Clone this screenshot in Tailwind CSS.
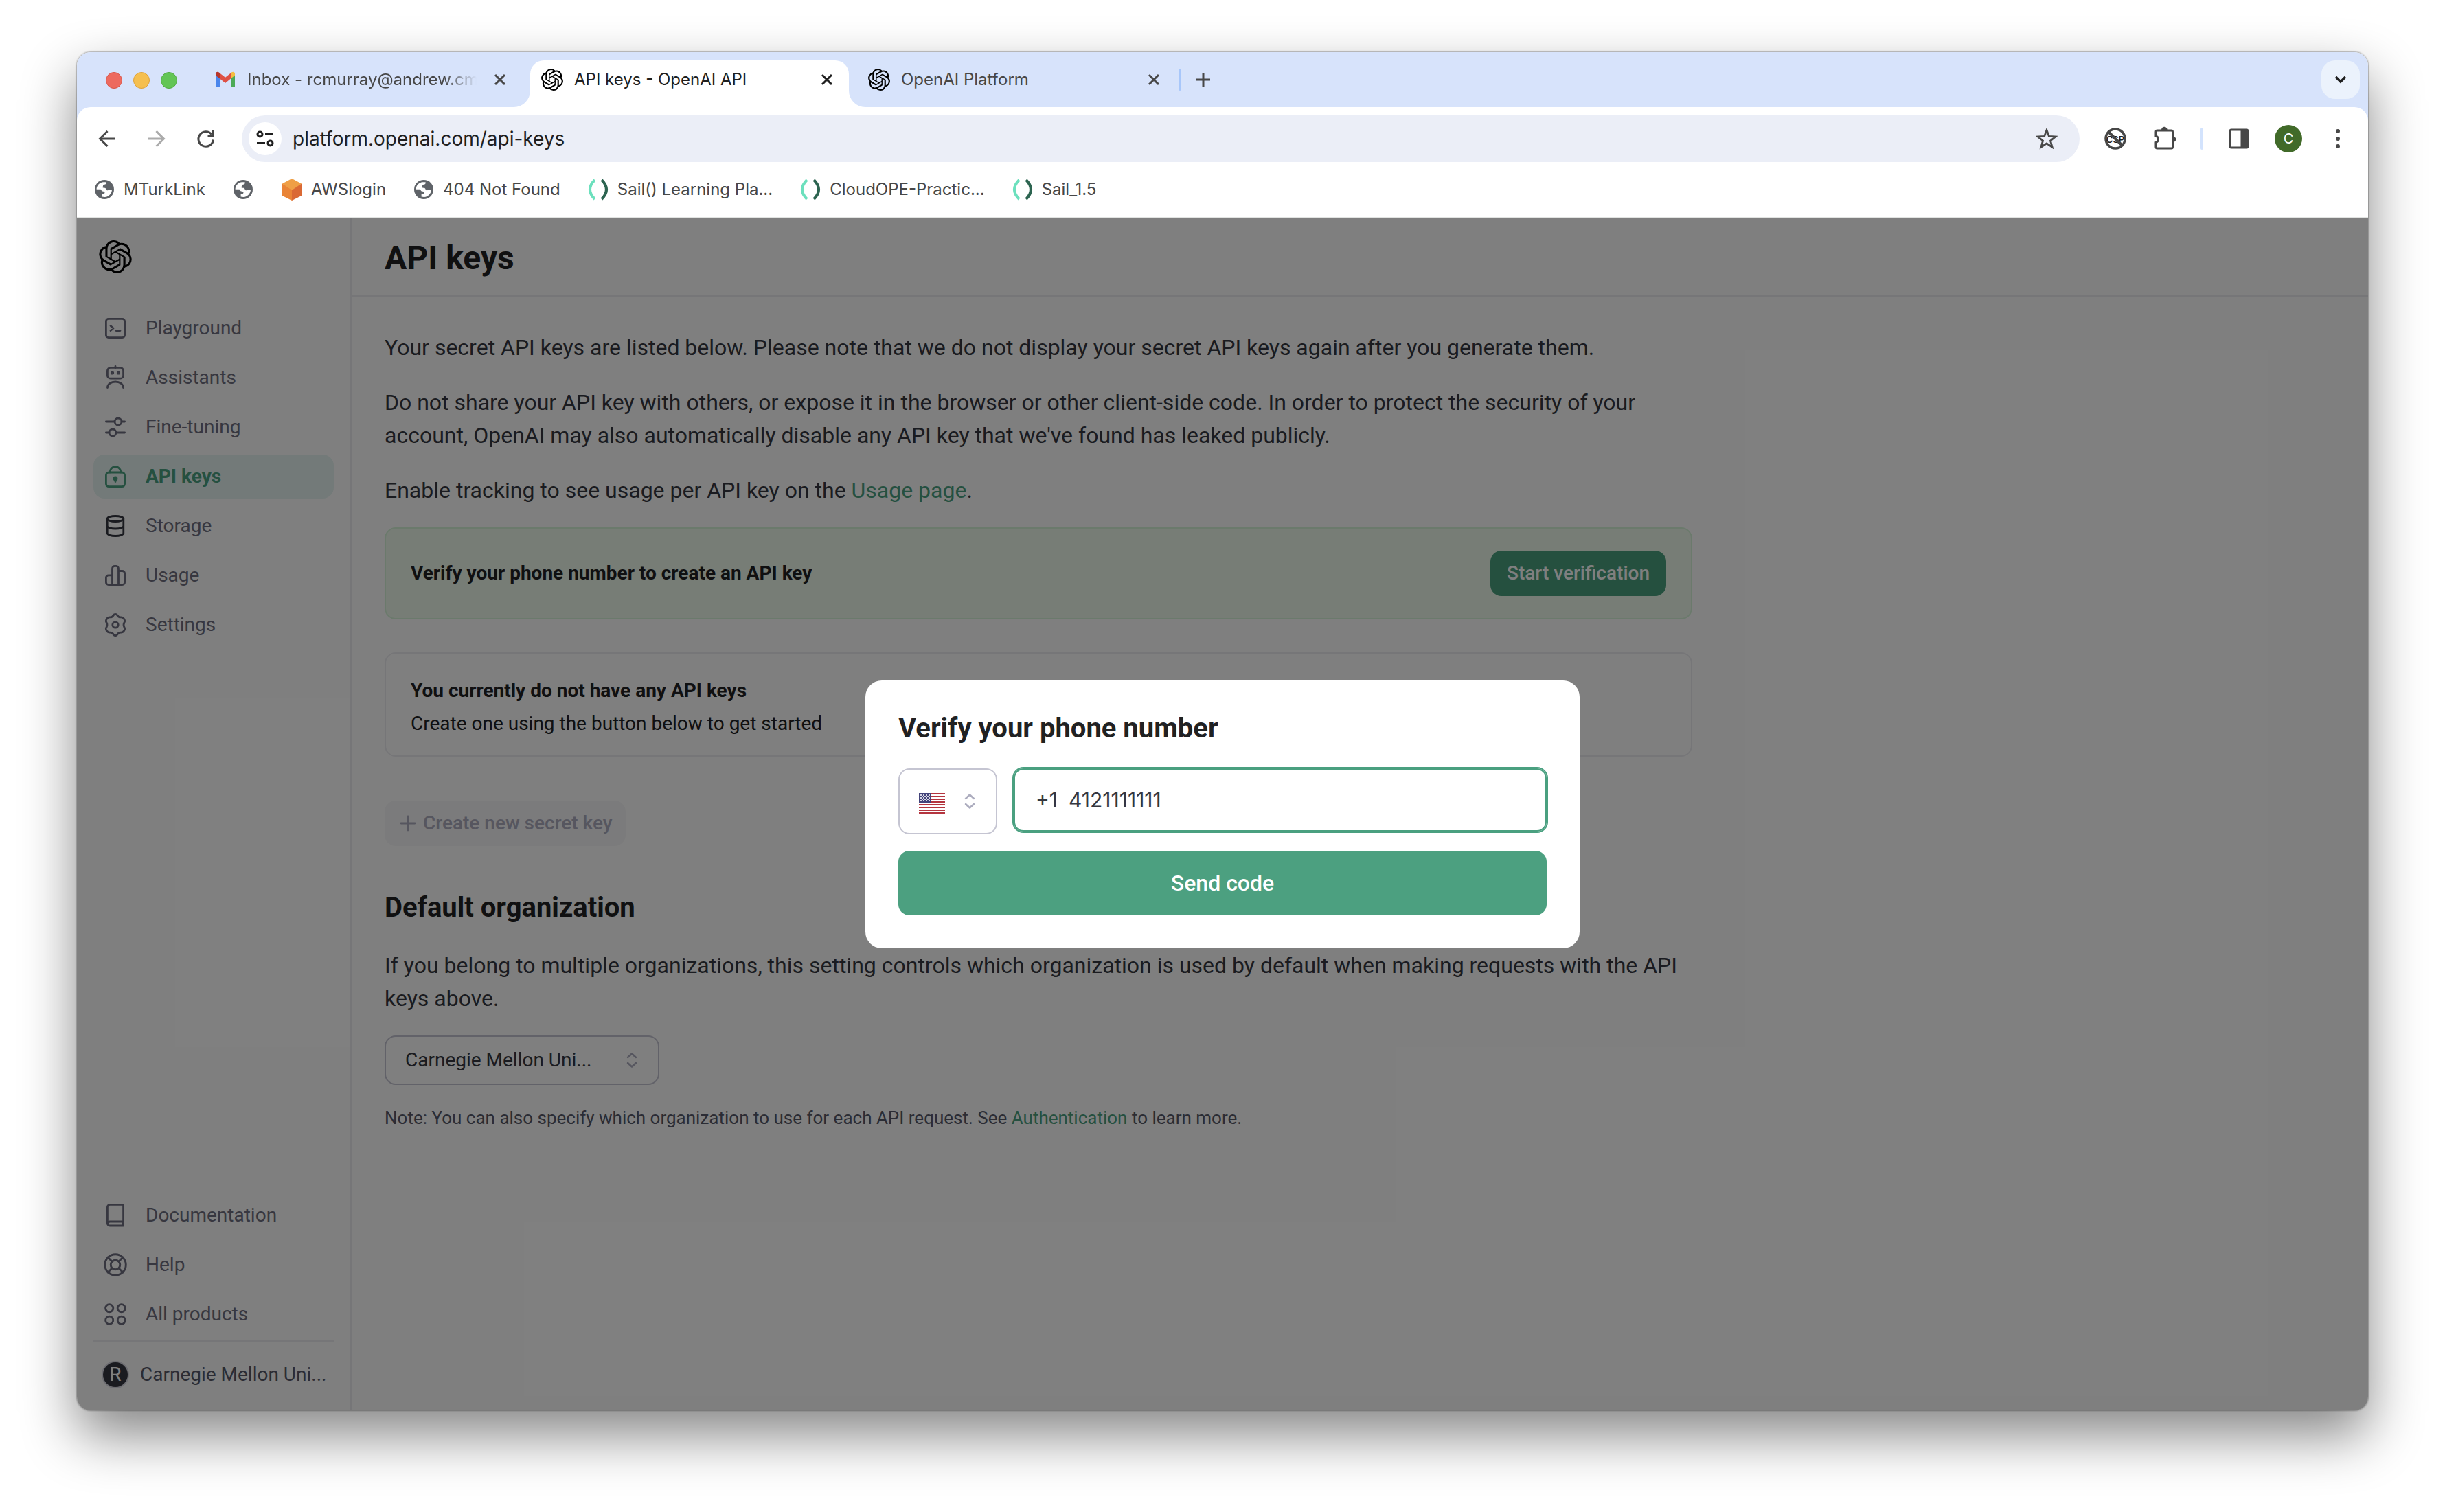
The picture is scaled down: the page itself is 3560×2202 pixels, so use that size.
<!DOCTYPE html>
<html lang="en">
<head>
<meta charset="utf-8">
<meta name="viewport" content="width=device-width, initial-scale=1">
<title>API keys - OpenAI API</title>
<script src="https://cdn.jsdelivr.net/npm/@tailwindcss/browser@4"></script>
</head>
<body class="flex min-h-screen bg-white px-28 pt-[76px] pb-[148px]">

<!-- Shared symbols -->
<svg class="hidden" aria-hidden="true">
  <symbol id="openai" viewBox="0 0 24 24"><path d="M22.2819 9.8211a5.9847 5.9847 0 0 0-.5157-4.9108 6.0462 6.0462 0 0 0-6.5098-2.9A6.0651 6.0651 0 0 0 4.9807 4.1818a5.9847 5.9847 0 0 0-3.9977 2.9 6.0462 6.0462 0 0 0 .7427 7.0966 5.98 5.98 0 0 0 .511 4.9107 6.051 6.051 0 0 0 6.5146 2.9001A5.9847 5.9847 0 0 0 13.2599 24a6.0557 6.0557 0 0 0 5.7718-4.2058 5.9894 5.9894 0 0 0 3.9977-2.9001 6.0557 6.0557 0 0 0-.7475-7.0729zm-9.022 12.6081a4.4755 4.4755 0 0 1-2.8764-1.0408l.1419-.0804 4.7783-2.7582a.7948.7948 0 0 0 .3927-.6813v-6.7369l2.02 1.1686a.071.071 0 0 1 .038.052v5.5826a4.504 4.504 0 0 1-4.4945 4.4944zm-9.6607-4.1254a4.4708 4.4708 0 0 1-.5346-3.0137l.142.0852 4.783 2.7582a.7712.7712 0 0 0 .7806 0l5.8428-3.3685v2.3324a.0804.0804 0 0 1-.0332.0615L9.74 19.9502a4.4992 4.4992 0 0 1-6.1408-1.6464zM2.3408 7.8956a4.485 4.485 0 0 1 2.3655-1.9728V11.6a.7664.7664 0 0 0 .3879.6765l5.8144 3.3543-2.0201 1.1685a.0757.0757 0 0 1-.071 0l-4.8303-2.7865A4.504 4.504 0 0 1 2.3408 7.872zm16.5963 3.8558L13.1038 8.364 15.1192 7.2a.0757.0757 0 0 1 .071 0l4.8303 2.7913a4.4944 4.4944 0 0 1-.6765 8.1042v-5.6772a.79.79 0 0 0-.407-.667zm2.0107-3.0231l-.142-.0852-4.7735-2.7818a.7759.7759 0 0 0-.7854 0L9.409 9.2297V6.8974a.0662.0662 0 0 1 .0284-.0615l4.8303-2.7866a4.4992 4.4992 0 0 1 6.6802 4.66zM8.3065 12.863l-2.02-1.1638a.0804.0804 0 0 1-.038-.0567V6.0742a4.4992 4.4992 0 0 1 7.3757-3.4537l-.142.0805L8.704 5.459a.7948.7948 0 0 0-.3927.6813zm1.0976-2.3654l2.602-1.4998 2.6069 1.4998v2.9994l-2.5974 1.4997-2.6067-1.4997Z"/></symbol>
  <symbol id="close" viewBox="0 0 20 20"><path d="M3 3l14 14M17 3L3 17" fill="none" stroke="currentColor" stroke-width="3"/></symbol>
  <symbol id="globe" viewBox="0 0 32 32"><circle cx="16" cy="16" r="14" fill="#5f6368"/><path d="M4.600 15.700C4.600 11 8 7 12.500 5.600C14.500 5.100 16.800 5 18.800 5.400C19 7.200 18 8.600 16.200 8.800C14.300 9 14.200 9.600 14 11C13.800 12.200 13.200 12.600 13.600 13.200C14.500 14 17 13.200 18 14.400C18.800 15.400 18.300 16.800 20 17.200C22 17.500 23.500 15.800 27 16C27 21.500 22.500 26.600 16.500 27C15 27 13.800 26.800 12.600 26.500L12.600 22.800C14.500 22.800 16.300 22.500 16.500 20.500C16.600 18.800 14.800 19 13 18.600C11.300 18 12 16.300 10.500 15.700Z" fill="#fff"/></symbol>
  <symbol id="sail" viewBox="0 0 32 32"><path d="M11 2Q-3 16 11 30" fill="none" stroke="#6ce0bd" stroke-width="4"/><path d="M21 2Q35 16 21 30" fill="none" stroke="#2c6450" stroke-width="4"/></symbol>
  <symbol id="updown" viewBox="0 0 16 24"><path d="M2 8l6-5.500L14 8M2 16l6 5.500L14 16" fill="none" stroke="currentColor" stroke-width="2.500" stroke-linecap="round" stroke-linejoin="round"/></symbol>
</svg>

<div class="relative flex min-w-0 flex-1 flex-col overflow-hidden rounded-[20px] bg-white shadow-[0_36px_80px_rgba(0,0,0,0.48),0_0_2px_1px_rgba(0,0,0,0.3)]">

  <!-- Browser chrome -->
  <header class="bg-[#d7e3fb] font-['Inter',sans-serif] text-[24px] leading-8 text-[#474747]">
    <div class="flex h-20 items-end pr-3">
      <div class="flex h-[68px] w-[184px] shrink-0 items-center gap-4 pt-[2px] pl-[42px] pb-3">
        <button aria-label="Close window" class="size-6 rounded-full border border-[#d8574b] bg-[#ed6a5f]"></button>
        <button aria-label="Minimize window" class="size-6 rounded-full border border-[#dea23a] bg-[#f5bf4f]"></button>
        <button aria-label="Zoom window" class="size-6 rounded-full border border-[#52a941] bg-[#62c555]"></button>
      </div>
      <nav aria-label="Tabs" class="flex items-end gap-3">
        <div class="flex h-[68px] w-[464px] items-center pr-[22px] pb-3 pl-4">
          <svg class="size-8 shrink-0" viewBox="0 0 32 32" aria-hidden="true"><path d="M2 8v17.500A1.500 1.500 0 0 0 3.500 27H8V13Z" fill="#4a86ec"/><path d="M30 8v17.500a1.500 1.500 0 0 1-1.500 1.500H24V13Z" fill="#4caa57"/><path d="M24 6.500v8l6-4.700V7.500C30 4.700 27 4 25 5.500Z" fill="#f4bd42"/><path d="M8 14.500v-8l8 6.200 8-6.200v8L16 21Z" fill="#de5145"/><path d="M2 7.500v2.300l6 4.700v-8L7 5.500C5 4 2 4.700 2 7.500Z" fill="#b8352a"/></svg>
          <a href="#" class="mr-6 ml-4 flex-1 overflow-hidden whitespace-nowrap [mask-image:linear-gradient(to_right,black_86%,transparent)]">Inbox - rcmurray@andrew.cmu.edu</a>
          <button aria-label="Close tab"><svg class="size-5"><use href="#close"/></svg></button>
        </div>
        <div class="relative flex h-[68px] w-[464px] items-center rounded-t-[20px] bg-white pr-[22px] pb-3 pl-4 text-[#1f1f1f]">
          <svg class="absolute bottom-0 -left-6 size-6 fill-white" viewBox="0 0 24 24" aria-hidden="true"><path d="M24 0v24H0A24 24 0 0 0 24 0Z"/></svg>
          <svg class="absolute -right-6 bottom-0 size-6 fill-white" viewBox="0 0 24 24" aria-hidden="true"><path d="M0 0v24h24A24 24 0 0 1 0 0Z"/></svg>
          <svg class="size-8 shrink-0 fill-black"><use href="#openai"/></svg>
          <a href="#" aria-current="page" class="mr-6 ml-4 flex-1 overflow-hidden whitespace-nowrap">API keys - OpenAI API</a>
          <button aria-label="Close tab"><svg class="size-5"><use href="#close"/></svg></button>
        </div>
        <div class="flex h-[68px] w-[464px] items-center pr-[22px] pb-3 pl-4">
          <svg class="size-8 shrink-0 fill-black"><use href="#openai"/></svg>
          <a href="#" class="mr-6 ml-4 flex-1 overflow-hidden whitespace-nowrap">OpenAI Platform</a>
          <button aria-label="Close tab"><svg class="size-5"><use href="#close"/></svg></button>
        </div>
      </nav>
      <div class="flex h-[68px] items-center gap-5 pb-3 pl-1">
        <span class="h-8 w-1 rounded-full bg-[#a8c7fa]"></span>
        <button aria-label="New tab"><svg class="size-6" viewBox="0 0 24 24"><path d="M12 2v20M2 12h20" fill="none" stroke="currentColor" stroke-width="3"/></svg></button>
      </div>
      <button aria-label="Search tabs" class="mb-3 ml-auto flex size-14 items-center justify-center rounded-[20px] bg-[#ebf2fc] text-[#1f1f1f]"><svg class="size-5" viewBox="0 0 20 20"><path d="M3 6l7 7 7-7" fill="none" stroke="currentColor" stroke-width="3.500"/></svg></button>
    </div>

    <div class="flex h-[92px] items-center rounded-t-[20px] bg-white pr-7 pl-7">
      <div class="flex gap-10 pr-9">
        <button aria-label="Back"><svg class="size-8" viewBox="0 0 32 32"><path d="M28 16H6M16.500 5L5.500 16l11 11" fill="none" stroke="currentColor" stroke-width="3"/></svg></button>
        <button aria-label="Forward" class="text-[#ababab]"><svg class="size-8" viewBox="0 0 32 32"><path d="M4 16h22M15.500 5l11 11-11 11" fill="none" stroke="currentColor" stroke-width="3"/></svg></button>
        <button aria-label="Reload"><svg class="size-8" viewBox="0 0 32 32"><path d="M26.500 17.500A10.800 10.800 0 1 1 24 9.500" fill="none" stroke="currentColor" stroke-width="3"/><path d="M28 4v9.500h-9.500v-3H25V4Z" fill="currentColor"/></svg></button>
      </div>
      <div class="flex h-[68px] flex-1 items-center rounded-full bg-[#ebeef7] pr-8 pl-[10px]">
        <button aria-label="View site information" class="flex size-12 shrink-0 items-center justify-center rounded-full bg-white text-[#1f1f1f]"><svg class="size-7" viewBox="0 0 28 28" fill="none" stroke="currentColor" stroke-width="3"><circle cx="6.500" cy="7.500" r="3.500"/><path d="M14 7.500h12M2 20.500h12"/><circle cx="21.500" cy="20.500" r="3.500"/></svg></button>
        <input aria-label="Address" value="platform.openai.com/api-keys" class="mx-4 min-w-0 flex-1 bg-transparent text-[28px] leading-10 text-[#1f1f1f] outline-none">
        <button aria-label="Bookmark this page"><svg class="size-8" viewBox="0 0 32 32"><path d="M16 3.500l3.400 8.900 9.600.5-7.500 6 2.600 9.300L16 22.900l-8.100 5.300 2.600-9.300-7.500-6 9.600-.5Z" fill="none" stroke="currentColor" stroke-width="2.800"/></svg></button>
      </div>
      <div class="flex items-center gap-10 pl-9">
        <button aria-label="Disable CSP"><svg class="size-8" viewBox="0 0 32 32"><circle cx="16" cy="16" r="14" fill="none" stroke="#474747" stroke-width="3.500"/><text x="16" y="21.500" font-size="13" font-weight="600" text-anchor="middle" fill="#1f1f1f">CSP</text><path d="M6 6l20 20" stroke="#474747" stroke-width="4"/></svg></button>
        <button aria-label="Extensions"><svg class="size-8 overflow-visible" viewBox="0 0 32 32"><path d="M5 4h20.500a2 2 0 0 1 2 2v22a2 2 0 0 1-2 2H5a2 2 0 0 1-2-2v-6.500a5 5 0 0 0 0-9.500V6a2 2 0 0 1 2-2Z" fill="none" stroke="currentColor" stroke-width="3"/><path d="M11 3a4.300 4.300 0 0 1 8.600 0ZM28 12.500a4.300 4.300 0 0 1 0 8.600Z" fill="currentColor"/></svg></button>
        <span class="-mx-1 h-8 w-1 rounded-full bg-[#d3e3fd]"></span>
        <button aria-label="Side panel"><svg class="size-8" viewBox="0 0 32 32"><rect x="3" y="3" width="26" height="26" rx="2" fill="none" stroke="currentColor" stroke-width="3.200"/><path d="M18.500 3H29v26H18.500Z" fill="currentColor"/></svg></button>
        <button aria-label="Profile" class="-mx-1 flex size-10 items-center justify-center rounded-full bg-[#416a29] text-[20px] leading-6 text-white">C</button>
        <button aria-label="Menu"><svg class="size-8" viewBox="0 0 32 32" fill="currentColor"><circle cx="16" cy="5" r="3"/><circle cx="16" cy="16" r="3"/><circle cx="16" cy="27" r="3"/></svg></button>
      </div>
    </div>

    <nav aria-label="Bookmarks" class="flex h-[70px] items-center gap-[39px] border-b-2 border-[#e1e3e1] bg-white px-6 pb-3">
      <a href="#" class="flex items-center gap-3"><svg class="size-8"><use href="#globe"/></svg>MTurkLink</a>
      <a href="#" aria-label="Bookmark"><svg class="size-8"><use href="#globe"/></svg></a>
      <a href="#" class="flex items-center gap-3"><svg class="size-8" viewBox="0 0 32 32" aria-hidden="true"><path d="M2 7.500L16 14v18L2 25Z" fill="#e98437"/><path d="M30 7.500L16 14v18l14-7Z" fill="#da6935"/><path d="M16 0L2 7.500 16 17l14-9.500Z" fill="#ef9f46"/></svg>AWSlogin</a>
      <a href="#" class="flex items-center gap-3"><svg class="size-8"><use href="#globe"/></svg>404 Not Found</a>
      <a href="#" class="flex items-center gap-3"><svg class="size-8"><use href="#sail"/></svg>Sail() Learning Pla...</a>
      <a href="#" class="flex items-center gap-3"><svg class="size-8"><use href="#sail"/></svg>CloudOPE-Practic...</a>
      <a href="#" class="flex items-center gap-3"><svg class="size-8"><use href="#sail"/></svg>Sail_1.5</a>
    </nav>
  </header>

  <!-- Web page -->
  <div class="relative flex flex-1 font-['Roboto',sans-serif] text-[#353740]">
    <aside class="flex w-[400px] shrink-0 flex-col border-r-2 border-[#ececf1] px-6 pt-8 pb-5 text-[28px] leading-10 text-[#6e6e80]">
      <a href="#" aria-label="OpenAI home" class="ml-2"><svg class="size-12 fill-black"><use href="#openai"/></svg></a>
      <nav aria-label="Main" class="mt-12 flex flex-col gap-2">
        <a href="#" class="flex h-16 items-center gap-7 rounded-2xl px-4"><svg class="size-8" viewBox="0 0 32 32" fill="none" stroke="currentColor" stroke-width="2.800" stroke-linecap="round" stroke-linejoin="round"><rect x="2.400" y="2.400" width="27.200" height="27.200" rx="3.500"/><path d="M9 12.500l4 3.500-4 3.500M17 19.500h6"/></svg>Playground</a>
        <a href="#" class="flex h-16 items-center gap-7 rounded-2xl px-4"><svg class="size-8 overflow-visible" viewBox="0 0 32 32" fill="none" stroke="currentColor" stroke-width="2.800" stroke-linecap="round"><rect x="4.400" y="1.400" width="23.200" height="15.800" rx="4.500"/><path d="M16-.5v2M4.500 30.500a11.500 8.500 0 0 1 23 0"/><circle cx="11.500" cy="9" r="1.200"/><circle cx="20.500" cy="9" r="1.200"/></svg>Assistants</a>
        <a href="#" class="flex h-16 items-center gap-7 rounded-2xl px-4"><svg class="size-8" viewBox="0 0 32 32" fill="none" stroke="currentColor" stroke-width="2.800" stroke-linecap="round"><circle cx="20" cy="8" r="5"/><path d="M2.400 8H15M25 8h4.600"/><circle cx="12" cy="24" r="5"/><path d="M2.400 24H7M17 24h12.600"/></svg>Fine-tuning</a>
        <a href="#" aria-current="page" class="flex h-16 items-center gap-7 rounded-2xl bg-[#e7f5f2] px-4 font-bold text-[#4aa080]"><svg class="size-8" viewBox="0 0 32 32" fill="none" stroke="currentColor" stroke-width="2.800" stroke-linecap="round"><rect x="2.400" y="10" width="27.200" height="20.600" rx="4"/><path d="M8 10a8 8.500 0 0 1 16 0M16 21.500v2"/><circle cx="16" cy="19" r="2" fill="currentColor"/></svg>API keys</a>
        <a href="#" class="flex h-16 items-center gap-7 rounded-2xl px-4"><svg class="size-8" viewBox="0 0 32 32" fill="none" stroke="#353740" stroke-width="2.800"><ellipse cx="16" cy="5.500" rx="11.800" ry="4"/><path d="M4.200 5.500v21c0 2.200 5.300 4 11.800 4s11.800-1.800 11.800-4v-21M4.200 16c0 2.200 5.300 4 11.800 4s11.800-1.800 11.800-4"/></svg>Storage</a>
        <a href="#" class="flex h-16 items-center gap-7 rounded-2xl px-4"><svg class="size-8" viewBox="0 0 32 32" fill="none" stroke="currentColor" stroke-width="2.800" stroke-linejoin="round"><path d="M11.500 29.600H6a3.600 3.600 0 0 1-3.600-3.600v-6.500a3.600 3.600 0 0 1 3.600-3.600h5.500ZM11.500 29.600V6a3.600 3.600 0 0 1 3.600-3.600h1.800A3.600 3.600 0 0 1 20.500 6v23.600ZM20.500 9.500H26a3.600 3.600 0 0 1 3.600 3.600V26a3.600 3.600 0 0 1-3.600 3.600h-5.500"/></svg>Usage</a>
        <a href="#" class="flex h-16 items-center gap-7 rounded-2xl px-4"><svg class="size-8 overflow-visible" viewBox="0 0 32 32" fill="none" stroke="currentColor" stroke-width="2.800" stroke-linejoin="round"><path d="M13.200 2C14.500-.3 17.500-.3 18.800 2C20 4.200 21.500 5 24 4.900C27 4.700 28.500 7.300 28.800 7.700C30.300 10 30.300 10.500 29 12.500C27.600 15 27.600 17 29 19.500C30.300 21.500 30.300 22 28.800 24.300C28.500 24.700 27 27.300 24 27.100C21.500 27 20 27.800 18.800 30C17.500 32.300 14.500 32.300 13.200 30C12 27.800 10.500 27 8 27.100C5 27.300 3.500 24.700 3.200 24.300C1.700 22 1.700 21.500 3 19.500C4.400 17 4.400 15 3 12.500C1.700 10.500 1.700 10 3.200 7.700C3.500 7.300 5 4.700 8 4.900C10.500 5 12 4.200 13.200 2Z"/><circle cx="16" cy="16" r="4.200"/></svg>Settings</a>
      </nav>
      <nav aria-label="Resources" class="mt-auto flex flex-col gap-2 border-b-2 border-[#ececf1] pb-[6px]">
        <a href="#" class="flex h-16 items-center gap-7 px-4"><svg class="size-8 overflow-visible" viewBox="0 0 32 32" fill="none" stroke="currentColor" stroke-width="2.800" stroke-linecap="round" stroke-linejoin="round"><path d="M27.600 31H8a3.600 3.600 0 0 1-3.600-3.600V4A3.600 3.600 0 0 1 8 .4h19.600v24.600H8a3 3 0 0 0-3 3M27 25v6"/></svg>Documentation</a>
        <a href="#" class="flex h-16 items-center gap-7 px-4"><svg class="size-8 overflow-visible" viewBox="0 0 32 32" fill="none" stroke="currentColor" stroke-width="2.900" stroke-linecap="round"><circle cx="16" cy="16" r="15.300"/><circle cx="16" cy="16" r="6.800"/><path d="M5 5l6 6M27 5l-6 6M5 27l6-6M27 27l-6-6"/></svg>Help</a>
        <a href="#" class="flex h-16 items-center gap-7 px-4"><svg class="size-8 overflow-visible" viewBox="0 0 32 32" fill="none" stroke="currentColor" stroke-width="2.800"><circle cx="7.200" cy="7.200" r="5.600"/><circle cx="24.800" cy="7.200" r="5.600"/><circle cx="7.200" cy="24.800" r="5.600"/><circle cx="24.800" cy="24.800" r="5.600"/></svg>All products</a>
      </nav>
      <button class="mt-4 flex h-16 items-center gap-4 px-3 text-left text-[#565869]">
        <span class="flex size-10 shrink-0 items-center justify-center rounded-full border-2 border-[#d9d9e3] bg-[#353740] text-[28px] leading-8 text-white">R</span>
        <span class="whitespace-nowrap">Carnegie Mellon Uni...</span>
      </button>
    </aside>

    <main class="min-w-0 flex-1">
      <div class="flex h-[114px] items-center border-b-2 border-[#ececf1] px-12 pt-1">
        <h1 class="text-[48px] leading-[56px] font-bold text-[#202123]">API keys</h1>
      </div>
      <div class="max-w-[2000px] px-12 pt-[50px] text-[32px] leading-[48px]">
        <p>Your secret API keys are listed below. Please note that we do not display your secret API keys again after you generate them.</p>
        <p class="mt-8">Do not share your API key with others, or expose it in the browser or other client-side code. In order to protect the security of your account, OpenAI may also automatically disable any API key that we've found has leaked publicly.</p>
        <p class="mt-8">Enable tracking to see usage per API key on the <a href="#" class="text-[#4aa080]">Usage page</a>.</p>

        <section class="mt-[30px] flex h-[134px] items-center justify-between rounded-2xl border-2 border-[#d6f5d8] bg-[#effaed] px-9 text-[28px] text-[#202123]">
          <h2 class="font-bold">Verify your phone number to create an API key</h2>
          <button class="h-[66px] rounded-2xl bg-[#4aa07e] px-6 font-medium text-white">Start verification</button>
        </section>

        <section class="mt-12 rounded-2xl border-2 border-[#ececf1] px-9 pt-[30px] pb-[22px] text-[28px] text-[#202123]">
          <h2 class="font-bold">You currently do not have any API keys</h2>
          <p>Create one using the button below to get started</p>
        </section>

        <button disabled class="mt-16 flex h-[66px] items-center gap-2 rounded-2xl bg-[#f7f7f8] px-5 text-[28px] font-medium text-[#acacbe]"><svg class="size-7" viewBox="0 0 28 28"><path d="M14 4v20M4 14h20" fill="none" stroke="currentColor" stroke-width="2.800" stroke-linecap="round"/></svg>Create new secret key</button>

        <h2 class="mt-[66px] text-[40px] font-bold text-[#202123]">Default organization</h2>
        <p class="mt-9">If you belong to multiple organizations, this setting controls which organization is used by default when making requests with the API keys above.</p>
        <div class="relative mt-[30px] w-[400px]">
          <select aria-label="Default organization" class="h-[72px] w-full appearance-none rounded-2xl border-2 border-[#c5c5d2] px-7 text-[28px] leading-10 text-[#353740]"><option>Carnegie Mellon Uni...</option></select>
          <svg class="pointer-events-none absolute top-6 right-8 h-6 w-4 text-[#acacbe]"><use href="#updown"/></svg>
        </div>
        <p class="mt-7 text-[26px] leading-10 text-[#565869]">Note: You can also specify which organization to use for each API request. See <a href="#" class="text-[#4aa080]">Authentication</a> to learn more.</p>
      </div>
    </main>

    <!-- Phone verification dialog over the dimmed page -->
    <div class="absolute inset-0 flex items-center justify-center bg-black/50">
      <form role="dialog" aria-labelledby="verify-title" class="w-[1040px] rounded-3xl bg-white p-12">
        <h2 id="verify-title" class="text-[40px] leading-[44px] font-bold text-[#202123]">Verify your phone number</h2>
        <div class="mt-9 flex h-24 items-start gap-6">
          <div class="relative">
            <select aria-label="Country" class="h-24 w-36 appearance-none rounded-2xl border-2 border-[#c5c5d2] text-[28px] text-transparent"><option label=" ">US</option></select>
            <svg class="pointer-events-none absolute top-9 left-[30px] h-[30px] w-[38px]" viewBox="0 0 38 30" aria-hidden="true"><path fill="#fff" d="M0 0h38v30H0z"/><path d="M0 1h38M0 5h38M0 9h38M0 13h38M0 17h38M0 21h38M0 25h38M0 29h38" stroke="#b4353f" stroke-width="2"/><path fill="#43437a" d="M0 0h18v14H0z"/><path d="M2 3h14M2 7h14M2 11h14" stroke="#d5d5e2" stroke-width="2" stroke-dasharray="2 2"/><path d="M4 5h12M4 9h12" stroke="#d5d5e2" stroke-width="2" stroke-dasharray="2 2"/></svg>
            <svg class="pointer-events-none absolute top-9 right-8 h-6 w-4 text-[#acacbe]"><use href="#updown"/></svg>
          </div>
          <label class="flex h-[92px] flex-1 items-center gap-4 rounded-[14px] border-2 border-[#4aa080] px-[30px] font-['Inter',sans-serif] text-[30px] leading-10 text-[#353740] ring-2 ring-[#4aa080]">
            <span>+1</span>
            <input type="tel" aria-label="Phone number" value="4121111111" class="min-w-0 flex-1 bg-transparent outline-none">
          </label>
        </div>
        <button type="button" class="mt-6 h-[94px] w-full rounded-2xl bg-[#4ca080] text-[32px] leading-10 font-medium text-white">Send code</button>
      </form>
    </div>
  </div>
</div>
</body>
</html>
